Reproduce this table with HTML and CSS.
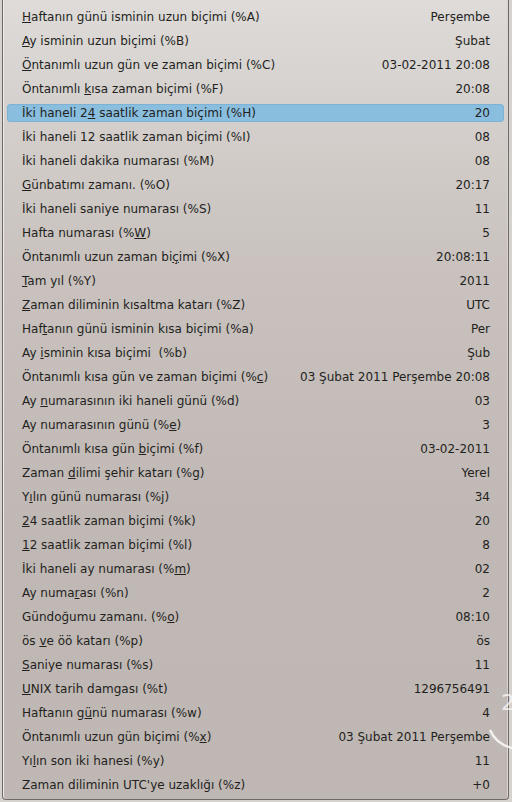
FILE: index.html
```html
<!DOCTYPE html>
<html lang="tr">
<head>
  <meta charset="UTF-8">
  <meta name="viewport" content="width=device-width, initial-scale=1.0">
  <title>Tarih biçimleri</title>
  <link rel="stylesheet" href="styles.css">
</head>
<body>
  <div class="menu">
    <ul class="items">
      <li class="item"><span class="label"><span class="mn">H</span>aftanın günü isminin uzun biçimi (%A)</span><span class="value">Perşembe</span></li>
      <li class="item"><span class="label"><span class="mn">A</span>y isminin uzun biçimi (%B)</span><span class="value">Şubat</span></li>
      <li class="item"><span class="label"><span class="mn">Ö</span>ntanımlı uzun gün ve zaman biçimi (%C)</span><span class="value">03-02-2011 20:08</span></li>
      <li class="item"><span class="label">Öntanımlı <span class="mn">k</span>ısa zaman biçimi (%F)</span><span class="value">20:08</span></li>
      <li class="item active"><span class="label">İki haneli 2<span class="mn">4</span> saatlik zaman biçimi (%H)</span><span class="value">20</span></li>
      <li class="item"><span class="label">İki haneli 12 saatlik zaman biçimi (%I)</span><span class="value">08</span></li>
      <li class="item"><span class="label">İki haneli dakika numarası (%M)</span><span class="value">08</span></li>
      <li class="item"><span class="label"><span class="mn">G</span>ünbatımı zamanı. (%O)</span><span class="value">20:17</span></li>
      <li class="item"><span class="label">İki haneli saniye numarası (%S)</span><span class="value">11</span></li>
      <li class="item"><span class="label">Hafta numarası (%<span class="mn">W</span>)</span><span class="value">5</span></li>
      <li class="item"><span class="label">Öntanımlı uzun zaman bi<span class="mn">ç</span>imi (%X)</span><span class="value">20:08:11</span></li>
      <li class="item"><span class="label"><span class="mn">T</span>am yıl (%Y)</span><span class="value">2011</span></li>
      <li class="item"><span class="label"><span class="mn">Z</span>aman diliminin kısaltma katarı (%Z)</span><span class="value">UTC</span></li>
      <li class="item"><span class="label">Haf<span class="mn">t</span>anın günü isminin kısa biçimi (%a)</span><span class="value">Per</span></li>
      <li class="item"><span class="label">Ay <span class="mn">i</span>sminin kısa biçimi&nbsp; (%b)</span><span class="value">Şub</span></li>
      <li class="item"><span class="label">Öntanımlı kısa gün ve zaman biçimi (%<span class="mn">c</span>)</span><span class="value">03 Şubat 2011 Perşembe 20:08</span></li>
      <li class="item"><span class="label">Ay <span class="mn">n</span>umarasının iki haneli günü (%d)</span><span class="value">03</span></li>
      <li class="item"><span class="label">Ay numarasının günü (%<span class="mn">e</span>)</span><span class="value">3</span></li>
      <li class="item"><span class="label">Öntanımlı kısa gün <span class="mn">b</span>içimi (%f)</span><span class="value">03-02-2011</span></li>
      <li class="item"><span class="label">Zaman <span class="mn">d</span>ilimi şehir katarı (%g)</span><span class="value">Yerel</span></li>
      <li class="item"><span class="label">Y<span class="mn">ı</span>lın günü numarası (%j)</span><span class="value">34</span></li>
      <li class="item"><span class="label"><span class="mn">2</span>4 saatlik zaman biçimi (%k)</span><span class="value">20</span></li>
      <li class="item"><span class="label"><span class="mn">1</span>2 saatlik zaman biçimi (%l)</span><span class="value">8</span></li>
      <li class="item"><span class="label">İki haneli ay numarası (%<span class="mn">m</span>)</span><span class="value">02</span></li>
      <li class="item"><span class="label">Ay numa<span class="mn">r</span>ası (%n)</span><span class="value">2</span></li>
      <li class="item"><span class="label">Gündoğumu zamanı. (%<span class="mn">o</span>)</span><span class="value">08:10</span></li>
      <li class="item"><span class="label">ös <span class="mn">v</span>e öö katarı (%p)</span><span class="value">ös</span></li>
      <li class="item"><span class="label"><span class="mn">S</span>aniye numarası (%s)</span><span class="value">11</span></li>
      <li class="item"><span class="label"><span class="mn">U</span>NIX tarih damgası (%t)</span><span class="value">1296756491</span></li>
      <li class="item"><span class="label">Haftanın g<span class="mn">ü</span>nü numarası (%w)</span><span class="value">4</span></li>
      <li class="item"><span class="label">Öntanımlı uzun gün biçimi (%<span class="mn">x</span>)</span><span class="value">03 Şubat 2011 Perşembe</span></li>
      <li class="item"><span class="label">Yı<span class="mn">l</span>ın son iki hanesi (%y)</span><span class="value">11</span></li>
      <li class="item"><span class="label">Zaman diliminin UTC'ye uzaklığı (%z)</span><span class="value">+0</span></li>
    </ul>
  </div>

  <!-- clock widget showing through from the desktop -->
  <svg class="clock-ghost" width="26" height="72" viewBox="0 0 26 72">
    <text x="15" y="30" font-family="DejaVu Sans" font-size="22" fill="rgba(255,255,255,0.7)">2</text>
    <path d="M4 50 Q10 64 26 68" fill="none" stroke="rgba(255,255,255,0.8)" stroke-width="2.5"/>
  </svg>
</body>
</html>
```

FILE: styles.css
```css
body {
  margin: 0;
  background-color: #d6d2ce;
  font-family: 'DejaVu Sans', Verdana, sans-serif;
  font-size: 12px;
  color: #231f1d;
  overflow: hidden;
}

.menu {
  position: relative;
  width: 505px;
  margin-left: 2px;
  padding: 5px 0 2px;
  background: linear-gradient(#dedbd8 0, #c9c2be 260px, #c0b8b4 520px, #bfb7b3 100%);
  border: 1px solid #6f6a67;
  border-top: none;
  border-radius: 0 0 4px 4px;
  box-shadow: inset 1px 0 0 #ece9e6, inset -1px 0 0 #d8d3cf;
}

.items {
  list-style: none;
  display: flex;
  flex-direction: column;
  gap: 6px;
  margin: 0;
  padding: 3px 4px;
}

.item {
  display: flex;
  align-items: center;
  justify-content: space-between;
  height: 18px;
  padding: 0 14px 0 15px;
  box-sizing: border-box;
  white-space: nowrap;
}

.item.active {
  background-color: #89bedf;
  border: 1px solid #7db2d5;
  border-radius: 3px;
  padding: 0 13px 0 14px;
}

.value {
  margin-left: 20px;
}

.mn {
  text-decoration: underline;
}

.clock-ghost {
  position: absolute;
  left: 486px;
  top: 680px;
}
```
